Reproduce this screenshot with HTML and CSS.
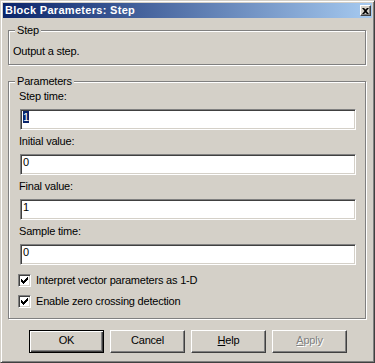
FILE: index.html
```html
<!DOCTYPE html>
<html>
<head>
  <meta charset="utf-8">
  <link rel="stylesheet" href="styles.css">
</head>
<body>
  <div class="window">
    <div class="titlebar">
      <span class="title">Block Parameters: Step</span>
      <span class="close-btn">
        <svg width="7" height="6" viewBox="0 0 7 6"><path d="M0 0h2l1.5 1.5L5 0h2L4.5 3 7 6H5L3.5 4.5 2 6H0l2.5-3z" fill="#000"/></svg>
      </span>
    </div>

    <div class="group group-step">
      <span class="group-label">Step</span>
      <p class="description">Output a step.</p>
    </div>

    <div class="group group-params">
      <span class="group-label">Parameters</span>
      <div class="param-list">
        <div class="param">
          <label>Step time:</label>
          <div class="field"><span class="selected">1</span></div>
        </div>
        <div class="param">
          <label>Initial value:</label>
          <div class="field">0</div>
        </div>
        <div class="param">
          <label>Final value:</label>
          <div class="field">1</div>
        </div>
        <div class="param">
          <label>Sample time:</label>
          <div class="field">0</div>
        </div>
      </div>

      <div class="checks">
        <div class="check-row">
          <span class="checkbox">
            <svg width="7" height="7" viewBox="0 0 7 7"><path d="M0 2h1v3h-1z M1 3h1v3h-1z M2 4h1v3h-1z M3 3h1v3h-1z M4 2h1v3h-1z M5 1h1v3h-1z M6 0h1v3h-1z" fill="#000"/></svg>
          </span>
          <span>Interpret vector parameters as 1-D</span>
        </div>
        <div class="check-row">
          <span class="checkbox">
            <svg width="7" height="7" viewBox="0 0 7 7"><path d="M0 2h1v3h-1z M1 3h1v3h-1z M2 4h1v3h-1z M3 3h1v3h-1z M4 2h1v3h-1z M5 1h1v3h-1z M6 0h1v3h-1z" fill="#000"/></svg>
          </span>
          <span>Enable zero crossing detection</span>
        </div>
      </div>
    </div>

    <div class="buttons">
      <button class="btn btn-default">OK</button>
      <button class="btn">Cancel</button>
      <button class="btn"><u>H</u>elp</button>
      <button class="btn" disabled><u>A</u>pply</button>
    </div>
  </div>
</body>
</html>
```

FILE: styles.css
```css
body {
  margin: 0;
  background: #d4d0c8;
  font-family: "Liberation Sans", Arial, sans-serif;
  font-size: 11px;
  line-height: 13px;
  letter-spacing: -0.2px;
  color: #000;
}

.window {
  width: 375px;
  height: 363px;
  box-sizing: border-box;
  padding: 2px;
  background: #d4d0c8;
  border: 1px solid;
  border-color: #d4d0c8 #404040 #404040 #d4d0c8;
  box-shadow: inset 1px 1px 0 #fff, inset -1px -1px 0 #808080;
}

/* title bar */
.titlebar {
  height: 15px;
  display: flex;
  align-items: center;
  justify-content: space-between;
  padding: 0 1px 0 2px;
  background: linear-gradient(to right, #0a246a, #a6caf0);
}

.title {
  color: #fff;
  font-weight: bold;
  letter-spacing: 0.3px;
}

.close-btn {
  width: 11px;
  height: 11px;
  box-sizing: border-box;
  display: flex;
  align-items: center;
  justify-content: center;
  background: #d4d0c8;
  border: 1px solid;
  border-color: #fff #404040 #404040 #fff;
  box-shadow: inset -1px -1px 0 #808080;
}

/* group boxes */
.group {
  position: relative;
  border: 1px solid #808080;
  box-shadow: 1px 1px 0 #fff, inset 1px 1px 0 #fff;
  margin: 0 6px 0 5px;
}

.group-label {
  position: absolute;
  top: -7px;
  left: 6px;
  padding: 0 2px;
  background: #d4d0c8;
}

.group-step {
  margin-top: 12px;
  padding: 14px 4px 6px;
}

.description {
  margin: 0;
}

.group-params {
  margin-top: 16px;
  padding: 8px 9px 10px 10px;
}

.param-list {
  display: flex;
  flex-direction: column;
  gap: 5px;
}

.param {
  display: flex;
  flex-direction: column;
  gap: 6px;
}

.field {
  height: 21px;
  box-sizing: border-box;
  margin-left: 1px;
  padding: 1px 1px 0 0;
  background: #fff;
  border: 1px solid;
  border-color: #808080 #fff #fff #808080;
  box-shadow: inset 1px 1px 0 #404040, inset -1px -1px 0 #d4d0c8;
  padding-left: 2px;
}

.selected {
  background: #0a246a;
  color: #fff;
}

/* checkboxes */
.checks {
  display: flex;
  flex-direction: column;
  gap: 8px;
  margin-top: 9px;
}

.check-row {
  display: flex;
  align-items: center;
  gap: 5px;
}

.checkbox {
  width: 13px;
  height: 13px;
  box-sizing: border-box;
  margin-left: -1px;
  display: flex;
  align-items: center;
  justify-content: center;
  background: #fff;
  border: 1px solid;
  border-color: #808080 #fff #fff #808080;
  box-shadow: inset 1px 1px 0 #404040, inset -1px -1px 0 #d4d0c8;
}

/* buttons */
.buttons {
  display: flex;
  gap: 6px;
  margin-top: 11px;
  padding-left: 26px;
}

.btn {
  width: 75px;
  height: 23px;
  box-sizing: border-box;
  padding: 0 0 2px;
  font: inherit;
  letter-spacing: inherit;
  color: #000;
  background: #d4d0c8;
  border: 1px solid;
  border-color: #fff #404040 #404040 #fff;
  border-radius: 0;
  box-shadow: inset -1px -1px 0 #808080;
}

.btn-default {
  border-color: #000;
  box-shadow: inset 1px 1px 0 #fff, inset -1px -1px 0 #404040, inset -2px -2px 0 #808080;
}

.btn:disabled {
  color: #808080;
  text-shadow: 1px 1px 0 #fff;
}
```
